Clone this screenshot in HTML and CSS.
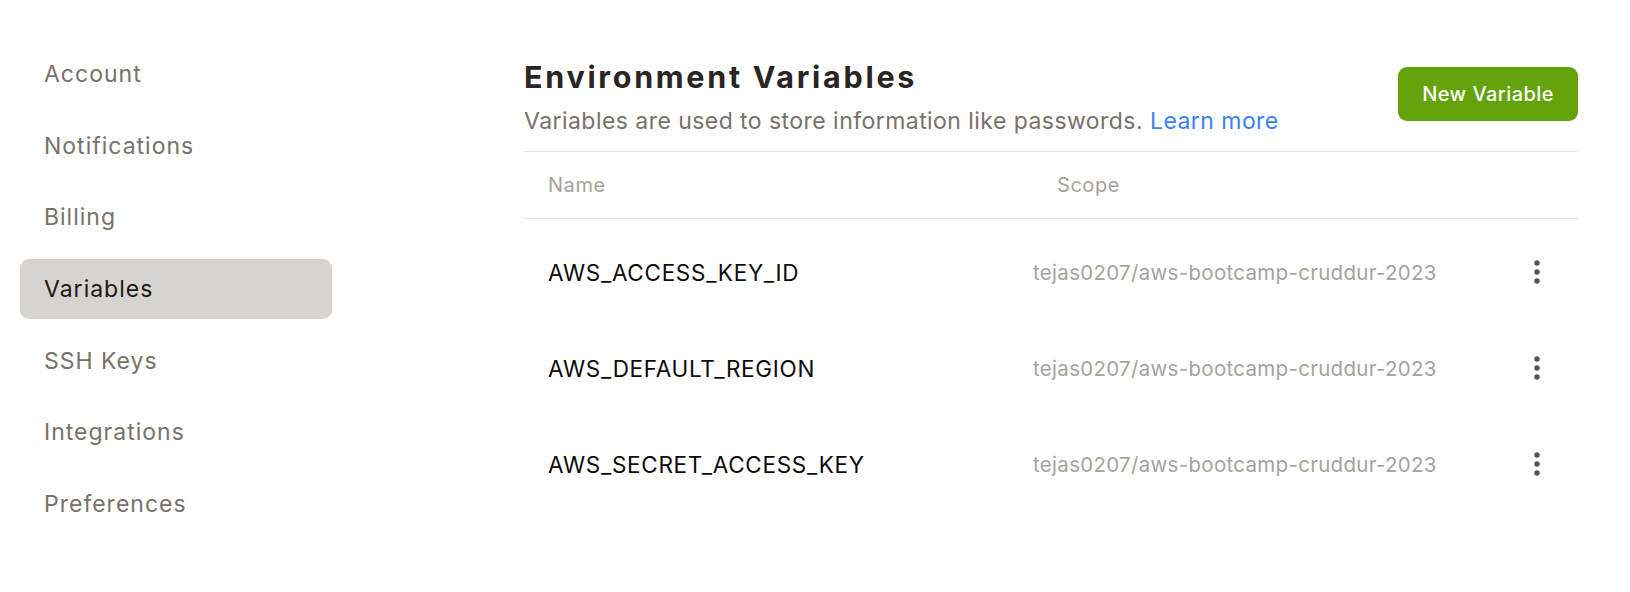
FILE: index.html
```html
<!DOCTYPE html>
<html lang="en">
<head>
<meta charset="utf-8">
<title>Environment Variables</title>
<link rel="stylesheet" href="styles.css">
</head>
<body>
<div class="page">
  <nav class="sidebar">
    <a class="nav-item">Account</a>
    <a class="nav-item">Notifications</a>
    <a class="nav-item">Billing</a>
    <a class="nav-item active">Variables</a>
    <a class="nav-item">SSH Keys</a>
    <a class="nav-item">Integrations</a>
    <a class="nav-item">Preferences</a>
  </nav>
  <main class="main">
    <header class="head">
      <div class="head-text">
        <h1 class="title">Environment Variables</h1>
        <p class="subtitle">Variables are used to store information like passwords. <a class="link">Learn more</a></p>
      </div>
      <button class="btn">New Variable</button>
    </header>
    <div class="table">
      <div class="thead">
        <div class="th">Name</div>
        <div class="th">Scope</div>
        <div class="th"></div>
      </div>
      <div class="tbody">
        <div class="tr">
          <div class="td name">AWS_ACCESS_KEY_ID</div>
          <div class="td scope">tejas0207/aws-bootcamp-cruddur-2023</div>
          <div class="td more"><svg width="6" height="24" viewBox="0 0 6 24"><circle cx="3" cy="3" r="2.7"/><circle cx="3" cy="12" r="2.7"/><circle cx="3" cy="21" r="2.7"/></svg></div>
        </div>
        <div class="tr">
          <div class="td name">AWS_DEFAULT_REGION</div>
          <div class="td scope">tejas0207/aws-bootcamp-cruddur-2023</div>
          <div class="td more"><svg width="6" height="24" viewBox="0 0 6 24"><circle cx="3" cy="3" r="2.7"/><circle cx="3" cy="12" r="2.7"/><circle cx="3" cy="21" r="2.7"/></svg></div>
        </div>
        <div class="tr">
          <div class="td name">AWS_SECRET_ACCESS_KEY</div>
          <div class="td scope">tejas0207/aws-bootcamp-cruddur-2023</div>
          <div class="td more"><svg width="6" height="24" viewBox="0 0 6 24"><circle cx="3" cy="3" r="2.7"/><circle cx="3" cy="12" r="2.7"/><circle cx="3" cy="21" r="2.7"/></svg></div>
        </div>
      </div>
    </div>
  </main>
</div>
</body>
</html>
```

FILE: styles.css
```css
* { box-sizing: border-box; }
html, body { margin: 0; padding: 0; background: #ffffff; }
body {
  font-family: Inter, "Noto Sans", sans-serif;
  color: #1c1917;
}
.page {
  display: flex;
  align-items: flex-start;
  padding: 44px 52px 0 20px;
}
.sidebar {
  width: 312px;
  flex: none;
  display: flex;
  flex-direction: column;
  gap: 11.7px;
}
.nav-item {
  display: block;
  height: 60px;
  line-height: 60px;
  padding-left: 24px;
  font-size: 23px;
  letter-spacing: 1px;
  color: #78716c;
  border-radius: 9px;
}
.nav-item.active {
  background: #d7d3d0;
  color: #1c1917;
}
.main {
  flex: 1;
  margin-left: 192px;
  padding-top: 15px;
}
.head {
  display: flex;
  justify-content: space-between;
  align-items: flex-start;
  padding-bottom: 14px;
}
.title {
  margin: 0;
  font-size: 30.5px;
  line-height: 36px;
  font-weight: 700;
  letter-spacing: 2.7px;
  color: #292524;
}
.subtitle {
  margin: 10px 0 0;
  font-size: 23px;
  line-height: 32px;
  letter-spacing: 0.45px;
  color: #78716c;
}
.link { color: #3b82f6; }
.btn {
  margin-top: 8px;
  height: 54px;
  padding: 0 24px;
  border: 0;
  border-radius: 9px;
  background: #65a30d;
  color: #ffffff;
  font-family: Inter, "Noto Sans", sans-serif;
  font-size: 20px;
  font-weight: 500;
  letter-spacing: 0.45px;
}
.table { border-top: 1px solid #e7e5e4; }
.thead, .tr {
  display: grid;
  grid-template-columns: 509px 1fr 82px;
  align-items: center;
}
.thead { border-bottom: 1px solid #e7e5e4; }
.th {
  padding: 19px 0 19px 24px;
  font-size: 20px;
  line-height: 28px;
  letter-spacing: 0.55px;
  color: #a8a29e;
}
.tbody { padding-top: 5px; }
.tr { height: 96px; }
.td.name {
  padding-left: 24px;
  font-size: 22.5px;
  letter-spacing: 0.7px;
  color: #0c0a09;
}
.td.scope {
  font-size: 20.5px;
  letter-spacing: 0.3px;
  color: #a8a29e;
}
.td.more {
  display: flex;
  justify-content: center;
}
.td.more svg { fill: #57534e; }
```
